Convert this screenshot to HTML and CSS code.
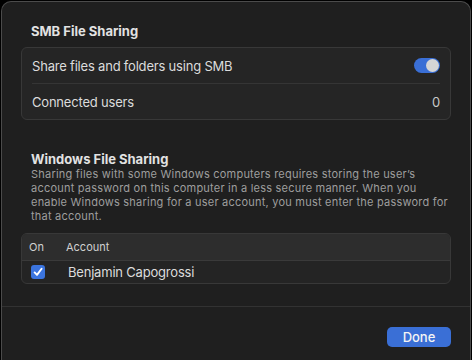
FILE: index.html
```html
<!doctype html>
<html lang="en">
  <head>
    <meta charset="UTF-8" />
    <title>File Sharing Options</title>
    <link rel="stylesheet" href="styles.css">
  </head>
  <body>
    <div class="sheet">
      <div class="sheet-body">
        <h2 class="section-title">SMB File Sharing</h2>
        <div class="group">
          <div class="group-row">
            <span>Share files and folders using SMB</span>
            <span class="toggle on"><span class="knob"></span></span>
          </div>
          <div class="group-sep"></div>
          <div class="group-row">
            <span>Connected users</span>
            <span class="value">0</span>
          </div>
        </div>

        <h2 class="section-title win-title">Windows File Sharing</h2>
        <p class="note">Sharing files with some Windows computers requires storing the user’s<br>
          account password on this computer in a less secure manner. When you<br>
          enable Windows sharing for a user account, you must enter the password for<br>
          that account.</p>

        <div class="table">
          <div class="table-head">
            <span class="col-on">On</span>
            <span class="col-account">Account</span>
          </div>
          <div class="table-row">
            <span class="col-on">
              <span class="checkbox">
                <svg width="14" height="14" viewBox="0 0 14 14"><path d="M3.6 7.4 L6 9.9 L10.6 3.8" fill="none" stroke="#fff" stroke-width="1.9" stroke-linecap="round" stroke-linejoin="round"/></svg>
              </span>
            </span>
            <span class="col-account name">Benjamin Capogrossi</span>
          </div>
        </div>
      </div>

      <div class="sheet-footer">
        <button class="done-btn">Done</button>
      </div>
    </div>
  </body>
</html>
```

FILE: styles.css
```css
body {
  margin: 0;
  padding: 0;
  background: #000;
  font-family: Inter, 'Liberation Sans', sans-serif;
  color: #dedede;
  overflow: hidden;
  height: 360px;
}

.sheet {
  margin: 1px 1px 0 1px;
  height: 359px;
  background: #1f1f1f;
  border: 1px solid #4b4b4b;
  border-bottom: none;
  border-radius: 10px 10px 0 0;
  box-sizing: border-box;
}

.sheet-body {
  padding: 20px 19px 22px 19px;
}

.section-title {
  margin: 0 0 7px 10px;
  font-size: 13px;
  line-height: 18px;
  font-weight: 700;
  color: #e2e2e2;
}

.group {
  background: #252525;
  border: 1px solid #383838;
  border-radius: 6px;
}

.group-row {
  display: flex;
  align-items: center;
  justify-content: space-between;
  height: 35px;
  padding: 0 10px;
  font-size: 13px;
  letter-spacing: -0.2px;
  color: #dcdcdc;
}

.group-sep {
  height: 1px;
  margin: 0 10px;
  background: #353535;
}

.value {
  color: #c8c8c8;
}

.toggle {
  position: relative;
  width: 26px;
  height: 15px;
  border-radius: 8px;
  background: #3a6fd6;
}

.toggle .knob {
  position: absolute;
  top: 1px;
  right: 1px;
  width: 13px;
  height: 13px;
  border-radius: 50%;
  background: #d6d6d6;
}

.win-title {
  margin: 31px 0 0 10px;
  line-height: 16px;
}

.note {
  margin: 0 0 10px 10px;
  font-size: 11px;
  line-height: 14px;
  letter-spacing: 0.22px;
  white-space: nowrap;
  color: #9e9e9e;
}

.table {
  border: 1px solid #383838;
  border-radius: 6px;
  background: #242424;
  overflow: hidden;
}

.table-head {
  display: flex;
  align-items: center;
  height: 26px;
  background: #2d2d2d;
  border-bottom: 1px solid #3a3a3a;
  font-size: 11px;
  color: #d0d0d0;
}

.table-row {
  display: flex;
  align-items: center;
  height: 22px;
  font-size: 13px;
  letter-spacing: -0.2px;
}

.col-on {
  width: 44px;
  padding-left: 7px;
  box-sizing: border-box;
}

.checkbox {
  display: block;
  width: 14px;
  height: 14px;
  margin-left: 2px;
  border-radius: 3px;
  background: #3b74de;
}

.checkbox svg {
  display: block;
}

.name {
  padding-left: 2px;
  color: #dcdcdc;
}

.sheet-footer {
  display: flex;
  justify-content: flex-end;
  padding: 20px 19px;
  border-top: 1px solid #323232;
}

.done-btn {
  width: 64px;
  height: 20px;
  border: none;
  border-radius: 5px;
  background: #3a6fd6;
  color: #f4f4f4;
  font-family: inherit;
  font-size: 13px;
  font-weight: 500;
  padding: 0;
}
```
